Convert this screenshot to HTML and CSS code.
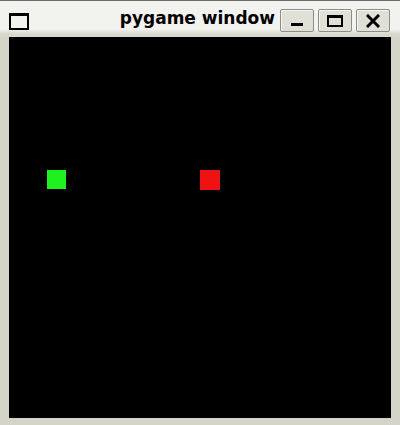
FILE: index.html
```html
<!DOCTYPE html>
<html>
<head>
<meta charset="utf-8">
<link rel="stylesheet" href="styles.css">
</head>
<body>
<div class="window">
  <div class="titlebar">
    <div class="app-icon"></div>
    <div class="title">pygame window</div>
    <div class="buttons">
      <div class="btn"><span class="glyph-min"></span></div>
      <div class="btn"><span class="glyph-max"></span></div>
      <div class="btn">
        <svg width="14" height="14" viewBox="0 0 14 14"><path d="M2 2 L12 12 M12 2 L2 12" stroke="#000" stroke-width="3" stroke-linecap="square"/></svg>
      </div>
    </div>
  </div>
  <div class="canvas">
    <div class="cell snake"></div>
    <div class="cell food"></div>
  </div>
</div>
</body>
</html>
```

FILE: styles.css
```css
html, body {
  margin: 0;
  padding: 0;
  background: #000;
}
.window {
  width: 400px;
  height: 425px;
  box-sizing: border-box;
  background: #d4d4c8;
  border-top: 1px solid #6a6a6a;
  display: flex;
  flex-direction: column;
  padding: 0 9px 7px 9px;
}
.titlebar {
  height: 36px;
  margin: 0 -9px;
  padding: 0 10px 0 9px;
  background: linear-gradient(#f2f2ee 0, #f2f2ee 28px, #d8d8cc 33px);
  display: flex;
  align-items: center;
  box-sizing: border-box;
}
.app-icon {
  width: 20px;
  height: 17px;
  box-sizing: border-box;
  border: 2px solid #000;
  border-top-width: 3px;
  margin-top: 4px;
}
.title {
  flex: 1;
  text-align: right;
  font-family: "DejaVu Sans", sans-serif;
  font-weight: bold;
  font-size: 17px;
  color: #000;
  padding-right: 5px;
  margin-top: -3px;
}
.buttons {
  display: flex;
  gap: 4px;
  margin-top: 3px;
}
.btn {
  width: 34px;
  height: 23px;
  box-sizing: border-box;
  border: 1px solid #8c8c8c;
  border-radius: 2px;
  background: #e0e0d6;
  box-shadow: inset 1px 1px 0 #f6f6f2;
  display: flex;
  align-items: center;
  justify-content: center;
}
.glyph-min {
  width: 12px;
  height: 3px;
  background: #000;
  margin-top: 8px;
}
.glyph-max {
  width: 16px;
  height: 12px;
  box-sizing: border-box;
  border: 2px solid #000;
  border-top-width: 3px;
}
.canvas {
  flex: 1;
  background: #000;
  position: relative;
}
.cell {
  position: absolute;
  width: 19px;
  height: 19px;
}
.snake {
  left: 38px;
  top: 133px;
  background: #1ff01f;
}
.food {
  left: 191px;
  top: 133px;
  width: 20px;
  height: 20px;
  background: #f01212;
}
```
